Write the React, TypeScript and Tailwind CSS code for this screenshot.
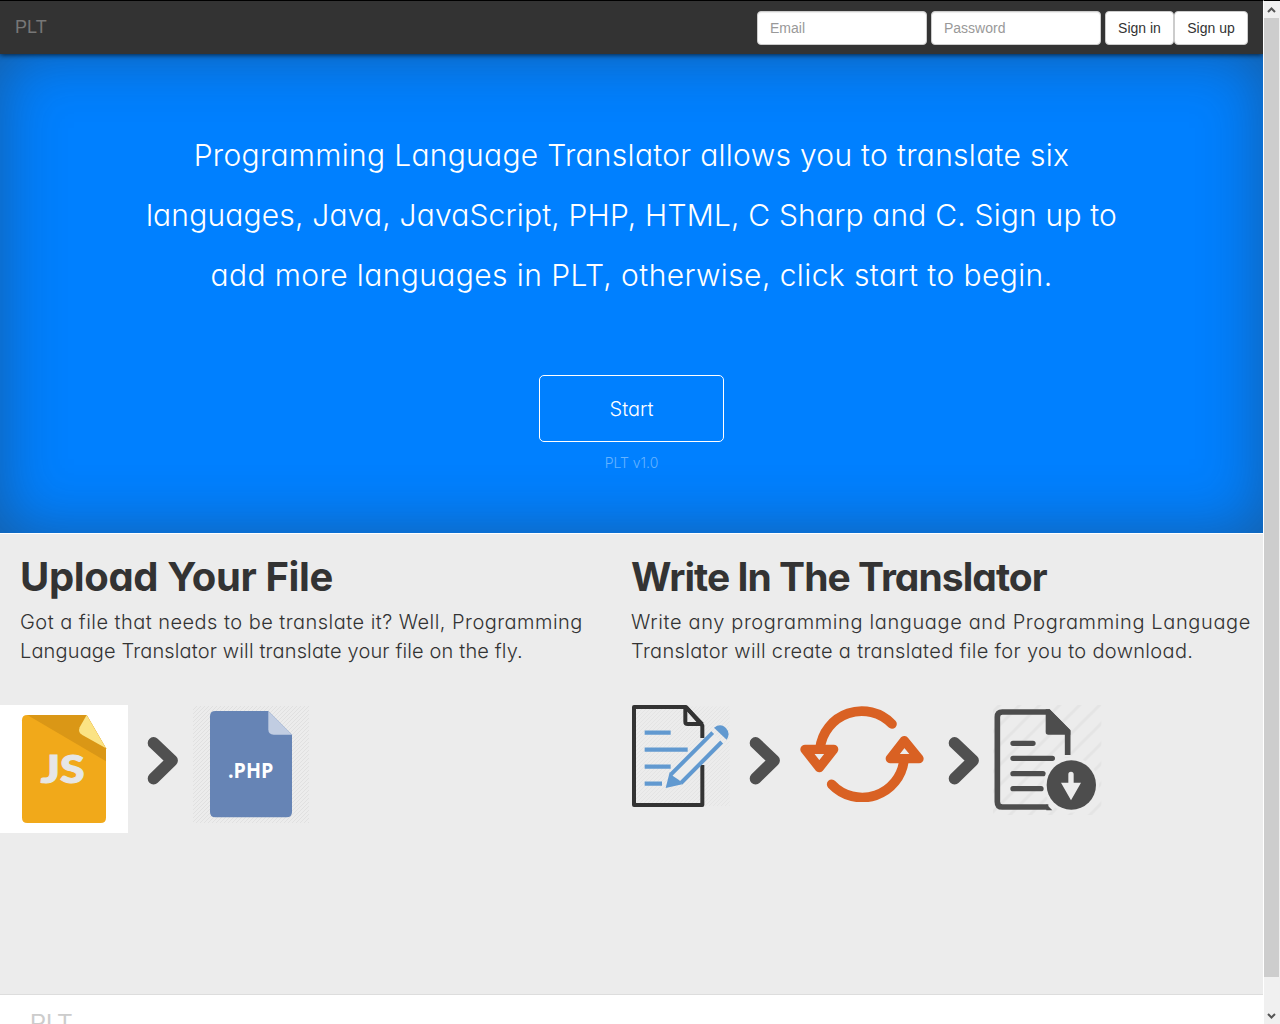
import type { ReactNode } from "react";

function Line({ className, children }: { className: string; children: ReactNode }) {
  return <span className={"block whitespace-nowrap " + className}>{children}</span>;
}

function Chevron({ className }: { className: string }) {
  return (
    <svg className={"h-[49px] w-[31px] shrink-0 " + className} viewBox="0 0 31 49" fill="none" stroke="#505050" strokeWidth="11.8" strokeLinecap="round" strokeLinejoin="round">
      <path d="M6.6 7 L25 24.5 L6.6 42.5" />
    </svg>
  );
}

function JsFile() {
  return (
    <svg className="h-32 w-32 shrink-0 bg-white" viewBox="0 0 384 384">
      <path d="M82 30H260L318 130V338Q318 354 302 354H82Q66 354 66 338V46Q66 30 82 30Z" fill="#f1a91a" />
      <path d="M82 30H260L318 130V169Z" fill="#da9716" />
      <path d="M260 30L318 130L247 90Q233 82 239 67Z" fill="#fbe384" />
      <text x="122" y="234" textLength="132" lengthAdjust="spacingAndGlyphs" fill="#e6e6e6" stroke="#e6e6e6" strokeWidth="3" className="font-['Lato'] text-[113px] font-black">JS</text>
    </svg>
  );
}

function PhpFile() {
  return (
    <svg className="ml-[15px] mt-px h-[117px] w-[116px] shrink-0" viewBox="579 33 348 351">
      <defs>
        <pattern id="fine" width="12" height="12" patternUnits="userSpaceOnUse">
          <path d="M-3 3L3 -3M0 12L12 0M9 15L15 9" stroke="#e0e0e0" strokeWidth="3" />
        </pattern>
      </defs>
      <rect x="579" y="33" width="348" height="351" fill="url(#fine)" />
      <path d="M646 48H805L876 119V351Q876 367 860 367H646Q630 367 630 351V64Q630 48 646 48Z" fill="#6684b5" />
      <path d="M805 48L876 119H821Q805 119 805 103Z" fill="#c1cde2" />
      <text x="684" y="248" textLength="136" lengthAdjust="spacingAndGlyphs" fill="#fff" className="font-['Open_Sans'] text-[62px] font-bold">.PHP</text>
    </svg>
  );
}

function EditFile() {
  return (
    <svg className="h-[102px] w-[98px] shrink-0" viewBox="36 30 294 306" fill="none">
      <defs>
        <pattern id="page" width="12" height="12" patternUnits="userSpaceOnUse">
          <path d="M-3 3L3 -3M0 12L12 0M9 15L15 9" stroke="#e4e4e4" strokeWidth="3" />
        </pattern>
      </defs>
      <rect x="42" y="34" width="287" height="299" fill="url(#page)" />
      <path d="M247 129V92L198 36H42V330H247V210" stroke="#333" strokeWidth="12" strokeLinejoin="round" />
      <path d="M196 36V80Q196 87 203 87H247" stroke="#333" strokeWidth="12" />
      <path d="M198 37L247 88" stroke="#333" strokeWidth="12" />
      <path d="M74 113H152M74 164H203M74 215H152M74 266H126" stroke="#6199d0" strokeWidth="13" />
      <path d="M152 234L275 111L305 140L184 264L160 262Z" fill="#ececec" />
      <path d="M153 238L278 113M183 264L305 141" stroke="#6199d0" strokeWidth="12" />
      <path d="M149 232L160 244L178 256L187 268L137 279Z" fill="#6199d0" />
      <path d="M282 98Q301 84 317 98Q333 115 320 134Z" fill="#6199d0" />
    </svg>
  );
}

function Refresh() {
  return (
    <svg className="ml-5 mt-px h-24 w-[124px] shrink-0" viewBox="540 32 372 288" fill="none" stroke="#d96123" strokeLinecap="round" strokeLinejoin="round">
      <path d="M600 160A126 126 0 0 1 816 86M635 267A126 126 0 0 0 852 194" strokeWidth="29" />
      <path d="M555 162H641L598 217ZM811 190H897L853 136Z" strokeWidth="28" />
    </svg>
  );
}

function DownloadFile() {
  return (
    <svg className="ml-[14px] h-[110px] w-[109px] shrink-0" viewBox="190 30 327 330" fill="none">
      <defs>
        <pattern id="wide" width="60" height="60" patternUnits="userSpaceOnUse">
          <path d="M-15 15L15 -15M0 60L60 0M45 75L75 45" stroke="#e4e4e4" strokeWidth="9" />
        </pattern>
      </defs>
      <rect x="190" y="30" width="325" height="330" fill="url(#wide)" />
      <path d="M414 180V110L356 51H218Q203 51 203 66V320Q203 336 218 336H356" stroke="#4d4d4d" strokeWidth="17" />
      <path d="M350 328L368 346H350Z" fill="#4d4d4d" />
      <path d="M348 43H360L422 105V119H356Q348 119 348 111Z" fill="#4d4d4d" />
      <path d="M250 145H310M250 190H368M250 236H340M250 281H334" stroke="#4d4d4d" strokeWidth="16" strokeLinecap="round" />
      <circle cx="425" cy="270" r="83" fill="#ececec" />
      <path d="M414 180V186" stroke="#ececec" strokeWidth="18" />
      <circle cx="425" cy="270" r="74" fill="#4d4d4d" />
      <path d="M416 263V238Q416 230 424 230Q432 230 432 238V263H454L424 316L394 263Z" fill="#ececec" />
    </svg>
  );
}

function ScrollArrow({ flip }: { flip?: boolean }) {
  return (
    <svg className={"h-[17px] w-[15px] " + (flip ? "rotate-180" : "")} viewBox="0 0 15 17" fill="none" stroke="#555" strokeWidth="2">
      <path d="M4 11L7.5 7.5L11 11" />
    </svg>
  );
}

const light = "font-['Inter',sans-serif] font-light [font-feature-settings:'cv11'] ";
const bold = "font-['Inter',sans-serif] font-bold [font-feature-settings:'cv11'] ";
const field = "h-[34px] w-[170px] rounded border border-[#ccc] bg-white px-3 text-[14px] text-[#555] placeholder:text-[#999] shadow-[inset_0_1px_1px_rgba(0,0,0,0.075)] ";
const button = "h-[34px] rounded border border-[#ccc] bg-white text-[14px] text-[#333] whitespace-nowrap ";

export default function App() {
  return (
    <div className="flex h-[1024px] w-[1280px] overflow-hidden bg-white font-['Liberation_Sans',Arial,sans-serif] text-[#333]">
      <div className="flex w-[1263px] shrink-0 flex-col">
        <nav className="relative z-10 flex h-[54px] shrink-0 items-start border-t border-black bg-[#333] pr-[15px] pl-[15px] pt-[10px] shadow-[0_1px_5px_rgba(0,0,0,0.7)]">
          <span className="mt-[6px] text-[18px] leading-[20px] text-[#777]">PLT</span>
          <div className="ml-auto flex">
            <input className={field} placeholder="Email" />
            <input className={field + "ml-1"} placeholder="Password" />
            <button className={button + "ml-1 w-[69px]"}>Sign in</button>
            <button className={button + "w-[74px]"}>Sign up</button>
          </div>
        </nav>

        <header className="flex h-[480px] shrink-0 flex-col items-center border-b border-white bg-[#0080ff] pt-[71px] text-white shadow-[inset_0_0_62px_rgba(51,51,51,0.45)]">
          <h1 className={light + "flex flex-col items-center text-[30px] leading-[60px]"}>
            <Line className="tracking-[0.3px]">Programming Language Translator allows you to translate six</Line>
            <Line className="tracking-[0.18px]">languages, Java, JavaScript, PHP, HTML, C Sharp and C. Sign up to</Line>
            <Line className="tracking-[0.41px]">add more languages in PLT, otherwise, click start to begin.</Line>
          </h1>
          <button className={light + "mt-[70px] h-[67px] w-[185px] rounded-[5px] border border-white text-[20px]"}>Start</button>
          <small className={light + "mt-[11px] text-[14px] leading-5 text-[#66b3ff]"}>PLT v1.0</small>
        </header>

        <main className="flex h-[461px] shrink-0 border-b border-[#ddd] bg-[#ececec] pt-[21px]">
          <section className="w-[631px] shrink-0">
            <div className="pl-5">
              <h2 className={bold + "text-[40px] leading-[44px]"}><Line className="tracking-[-0.36px]">Upload Your File</Line></h2>
              <p className={light + "mt-[9px] text-[20px] leading-[29px]"}>
                <Line className="tracking-[0.465px]">Got a file that needs to be translate it? Well, Programming</Line>
                <Line className="tracking-[0.142px]">Language Translator will translate your file on the fly.</Line>
              </p>
            </div>
            <div className="mt-[39px] flex items-start">
              <JsFile />
              <Chevron className="ml-[19px] mt-[31px]" />
              <PhpFile />
            </div>
          </section>
          <section className="w-[632px] shrink-0">
            <h2 className={bold + "text-[39px] leading-[44px]"}><Line className="tracking-[-0.96px]">Write In The Translator</Line></h2>
            <p className={light + "mt-[9px] text-[20px] leading-[29px]"}>
              <Line className="tracking-[0.625px]">Write any programming language and Programming Language</Line>
              <Line className="tracking-[0.325px]">Translator will create a translated file for you to download.</Line>
            </p>
            <div className="mt-[39px] flex items-start pl-px">
              <EditFile />
              <Chevron className="ml-[19px] mt-[31px]" />
              <Refresh />
              <Chevron className="ml-6 mt-[31px]" />
              <DownloadFile />
            </div>
          </section>
        </main>

        <footer className="shrink-0 pt-[14px] pl-[30px] text-[24px] leading-7 text-[#ccc]">PLT</footer>
      </div>

      <div className="relative z-20 flex w-[17px] shrink-0 flex-col border-t border-l border-t-black border-l-white bg-[#f0f0f0]">
        <ScrollArrow />
        <div className="h-[959px] w-[15px] bg-[#cdcdcd]" />
        <div className="mt-auto -mb-px"><ScrollArrow flip /></div>
      </div>
    </div>
  );
}
